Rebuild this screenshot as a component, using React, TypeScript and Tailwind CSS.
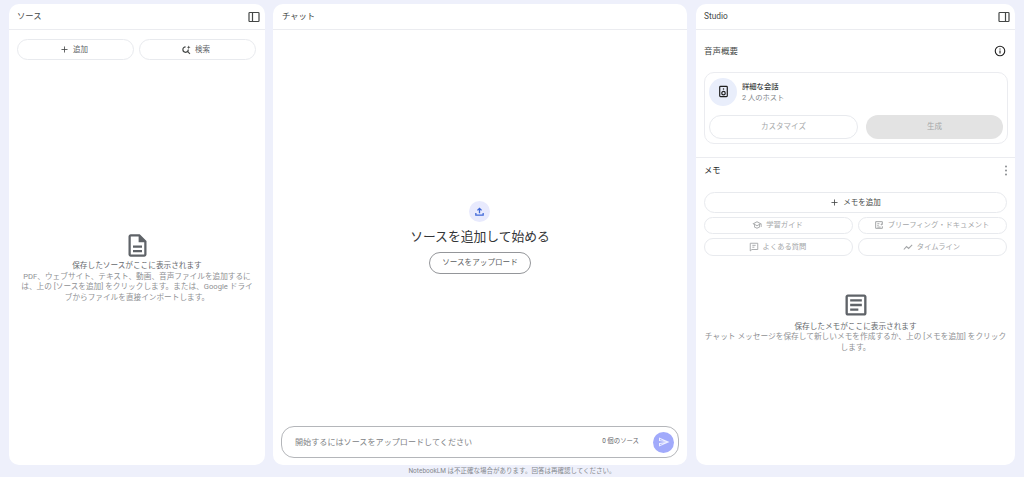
import { Plus } from 'lucide-react';

const font = 'font-["Roboto","Noto_Sans_CJK_JP",sans-serif]';

function PanelToggle({ side }: { side: 'left' | 'right' }) {
  return (
    <svg width="12" height="12" viewBox="0 0 12 12" fill="none" stroke="#444746" strokeWidth="1.2">
      <rect x="1" y="1.5" width="10" height="9" rx="0.8" />
      {side === 'left' ? <path d="M4.5 1.5v9" /> : <path d="M7.5 1.5v9" />}
    </svg>
  );
}

function PanelHeader({ title, side }: { title: string; side?: 'left' | 'right' }) {
  return (
    <div className="flex h-[26px] shrink-0 items-center justify-between border-b border-[#ebecf0] pl-2 pr-[5px] text-[8.3px] text-[#444746]">
      <span>{title}</span>
      {side && <PanelToggle side={side} />}
    </div>
  );
}

function PillButton({ icon, label, className }: { icon: React.ReactNode; label: string; className: string }) {
  return (
    <button className={`flex items-center justify-center gap-[4px] rounded-full border border-[#e8eaee] bg-white ${className}`}>
      {icon}
      <span className="pt-px">{label}</span>
    </button>
  );
}

function SearchSpark() {
  return (
    <svg width="10" height="10" viewBox="0 0 24 24" fill="none" stroke="#444746" strokeWidth="2.8">
      <path d="M11 4.5a6.5 6.5 0 1 0 6.5 6.5" />
      <path d="M15.5 15.5L21.5 21.5" />
      <path d="M18.5 1l1.2 3.3L23 5.5l-3.3 1.2L18.5 10l-1.2-3.3L14 5.5l3.3-1.2z" fill="#444746" stroke="none" />
    </svg>
  );
}

function Speaker() {
  return (
    <svg width="13" height="13" viewBox="0 0 24 24" fill="none" stroke="#1f1f1f" strokeWidth="2.2">
      <rect x="5" y="2.5" width="14" height="19" rx="1.5" />
      <circle cx="12" cy="15" r="3.2" />
      <circle cx="12" cy="7.5" r="1.4" fill="#1f1f1f" stroke="none" />
    </svg>
  );
}

function School() {
  return (
    <svg width="10" height="10" viewBox="0 0 24 24" fill="#a4a6a8">
      <path d="M12 3L1 9l4 2.18v6L12 21l7-3.82v-6l2-1.09V17h2V9L12 3zm6.82 6L12 12.72 5.18 9 12 5.28 18.82 9zM17 15.99l-5 2.73-5-2.73v-3.72L12 15l5-2.73v3.72z" />
    </svg>
  );
}

function BriefDoc() {
  return (
    <svg width="10" height="10" viewBox="0 0 24 24" fill="none" stroke="#a4a6a8" strokeWidth="2.4">
      <path d="M20 11V4H4v16h16v-5" />
      <path d="M8 9h5M8 13h3M8 17h8" />
      <path d="M18 7l1 2.5 2.5 1-2.5 1-1 2.5-1-2.5-2.5-1 2.5-1z" fill="#a4a6a8" stroke="none" />
    </svg>
  );
}

function Faq() {
  return (
    <svg width="10" height="10" viewBox="0 0 24 24" fill="none" stroke="#a4a6a8" strokeWidth="2.2">
      <path d="M3 3h18v15H7l-4 3.5z" />
      <path d="M8 8h8M8 12.5h5" />
    </svg>
  );
}

function Timeline() {
  return (
    <svg width="10" height="10" viewBox="0 0 24 24" fill="none" stroke="#a4a6a8" strokeWidth="2.6">
      <path d="M2 18l6.5-7 5 4.5L22 7" />
    </svg>
  );
}

export default function App() {
  return (
    <div className={`flex h-[477px] w-[1024px] flex-col overflow-hidden bg-[#eef0fb] ${font}`}>
      <div className="mt-1 flex h-[461px] pl-[9px]">
        <section className="flex w-[256px] flex-col rounded-[10px] bg-white">
          <PanelHeader title="ソース" side="left" />
          <div className="mt-[9px] flex gap-[5px] px-2 text-[7.5px] text-[#5f6368]">
            <PillButton className="h-[21px] w-[117px] pr-[3px]" icon={<Plus size={9} strokeWidth={2.2} color="#444746" />} label="追加" />
            <PillButton className="h-[21px] w-[117px] pr-[4px]" icon={<SearchSpark />} label="検索" />
          </div>
          <div className="mt-[172px] flex flex-col items-center px-[10px] text-center">
            <svg width="27" height="27" viewBox="0 0 24 24" fill="#5f6368">
              <path d="M8 16h8v2H8zm0-4h8v2H8zm6-10H6c-1.1 0-2 .9-2 2v16c0 1.1.89 2 1.99 2H18c1.1 0 2-.9 2-2V8l-6-6zm4 18H6V4h7v5h5v11z" />
            </svg>
            <p className="mt-[2px] text-[7.65px] leading-[10.5px] text-[#66696d]">保存したソースがここに表示されます</p>
            <p className="text-[7.65px] leading-[10.5px] text-[#8f9194]">
              PDF、ウェブサイト、テキスト、動画、音声ファイルを追加するには、上の [ソースを追加] をクリックします。または、Google ドライブからファイルを直接インポートします。
            </p>
          </div>
        </section>

        <section className="ml-2 flex w-[414px] flex-col rounded-[10px] bg-white">
          <div className="[&>div]:pl-[9px]">
            <PanelHeader title="チャット" />
          </div>
          <div className="flex flex-1 flex-col items-center pt-[171px]">
            <div className="flex h-[21px] w-[21px] -translate-x-px items-center justify-center rounded-full bg-[#e8eafd]">
              <svg width="11" height="11" viewBox="0 0 24 24" fill="none" stroke="#3f68d8" strokeWidth="2.8">
                <path d="M12 16V5M7.5 9.5L12 5l4.5 4.5M4 15v5h16v-5" />
              </svg>
            </div>
            <h2 className="mt-[5px] text-[12.8px] leading-[20px] text-[#333537]">ソースを追加して始める</h2>
            <button className="mt-[5px] h-[22px] w-[102px] rounded-full border border-[#94969a] text-[7.6px] text-[#5a5d60]">
              ソースをアップロード
            </button>
          </div>
          <div className="mb-[7px] ml-2 flex h-[32px] w-[398px] items-center rounded-[13px] border border-[#b4b6ba] pl-[13px] pr-[4px]">
            <span className="text-[8.1px] text-[#808285]">開始するにはソースをアップロードしてください</span>
            <span className="ml-auto text-[6.4px] text-[#5f6368]">0 個のソース</span>
            <div className="ml-[14px] flex h-[21px] w-[21px] items-center justify-center rounded-full bg-[#a1aafb]">
              <svg width="12" height="12" viewBox="0 0 24 24" fill="#eef0ff">
                <path d="M4.01 6.03l7.51 3.22-7.52-1 .01-2.22m7.5 8.72L4 17.97v-2.22l7.51-1M2.01 3L2 10l15 2-15 2 .01 7L23 12 2.01 3z" />
              </svg>
            </div>
          </div>
        </section>

        <section className="ml-[9px] flex w-[319px] flex-col rounded-[10px] bg-white">
          <PanelHeader title="Studio" side="right" />
          <div className="mt-[15px] flex items-center justify-between pl-2 pr-[9px]">
            <span className="text-[8.5px] text-[#444746]">音声概要</span>
            <svg width="12" height="12" viewBox="0 0 24 24" fill="none" stroke="#1f1f1f" strokeWidth="2.2">
              <circle cx="12" cy="12" r="9.5" />
              <path d="M12 11v6M12 7v2" />
            </svg>
          </div>
          <div className="ml-2 mt-[14px] h-[72px] w-[304px] rounded-[10px] border border-[#ebecf0] px-1 pt-[5px]">
            <div className="flex items-center gap-[5px]">
              <div className="flex h-[28px] w-[28px] items-center justify-center rounded-full bg-[#e9eefb]">
                <Speaker />
              </div>
              <div className="flex flex-col">
                <span className="text-[7.3px] font-medium leading-[11px] text-[#3c3f41]">詳細な会話</span>
                <span className="text-[7.3px] leading-[11px] text-[#80848a]">2 人のホスト</span>
              </div>
            </div>
            <div className="mt-[9px] flex gap-2 text-[7.5px] text-[#a4a6a8]">
              <button className="h-[24px] w-[149px] rounded-full border border-[#e8eaee]">カスタマイズ</button>
              <button className="h-[24px] w-[137px] rounded-full bg-[#e3e3e3]">生成</button>
            </div>
          </div>
          <div className="mt-[13px] border-t border-[#ebecf0]" />
          <div className="mt-[6px] flex h-[13px] items-center justify-between pl-2 pr-[7px]">
            <span className="text-[8.3px] text-[#1f1f1f]">メモ</span>
            <svg width="4" height="11" viewBox="0 0 4 11" fill="#8a8d90">
              <circle cx="2" cy="1.5" r="1" />
              <circle cx="2" cy="5.5" r="1" />
              <circle cx="2" cy="9.5" r="1" />
            </svg>
          </div>
          <div className="ml-2 mt-[15px] grid w-[303px] grid-cols-2 gap-x-[5px] gap-y-[4px] text-[7.3px] text-[#a4a6a8]">
            <PillButton className="col-span-2 h-[21px] text-[7.5px] text-[#444746]" icon={<Plus size={9} strokeWidth={2.2} color="#444746" />} label="メモを追加" />
            <PillButton className="h-[17px] pr-[2px]" icon={<School />} label="学習ガイド" />
            <PillButton className="h-[17px] pr-[2px]" icon={<BriefDoc />} label="ブリーフィング・ドキュメント" />
            <PillButton className="h-[18px] pr-[2px]" icon={<Faq />} label="よくある質問" />
            <PillButton className="h-[18px] pr-[2px]" icon={<Timeline />} label="タイムライン" />
          </div>
          <div className="mt-[35px] flex flex-col items-center px-[8px] text-center">
            <svg width="28" height="28" viewBox="0 0 24 24" fill="#5f6368">
              <path d="M19 5v14H5V5h14m0-2H5c-1.1 0-2 .9-2 2v14c0 1.1.9 2 2 2h14c1.1 0 2-.9 2-2V5c0-1.1-.9-2-2-2z" />
              <path d="M14 17H7v-2h7v2zm3-4H7v-2h10v2zm0-4H7V7h10v2z" />
            </svg>
            <p className="mt-[3px] text-[7.65px] leading-[10.5px] text-[#66696d]">保存したメモがここに表示されます</p>
            <p className="text-[7.7px] leading-[10.5px] text-[#8f9194]">
              チャット メッセージを保存して新しいメモを作成するか、上の [メモを追加] をクリックします。
            </p>
          </div>
        </section>
      </div>
      <p className="mt-[1px] text-center text-[6.5px] leading-[10px] text-[#85888d]">
        NotebookLM は不正確な場合があります。回答は再確認してください。
      </p>
    </div>
  );
}
